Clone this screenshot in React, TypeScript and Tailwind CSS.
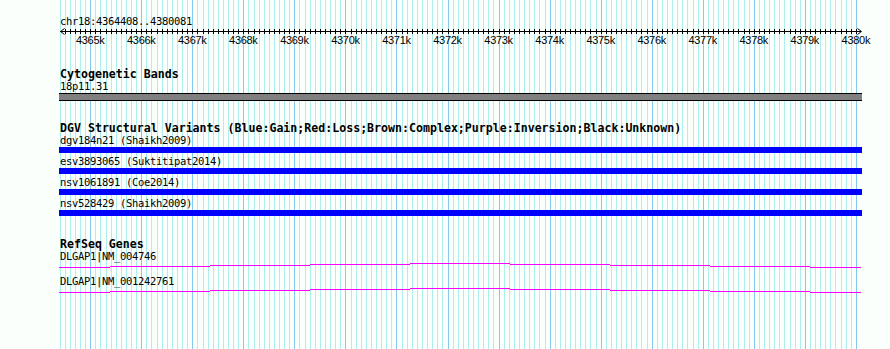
import React from "react";

const START = 4364408;
const END = 4380081;
const px = (bp: number) => 60 + ((bp - START) * 800) / (END - START);

const gridLines: { x: number; major: boolean }[] = [];
for (let bp = 4364400; bp <= 4380000; bp += 100) {
  gridLines.push({ x: Math.round(px(bp)), major: bp % 1000 === 0 });
}

const ticks: number[] = [];
for (let bp = 4364500; bp <= 4380000; bp += 100) ticks.push(Math.round(px(bp)));

const labels: { x: number; t: string }[] = [];
for (let k = 4365; k <= 4380; k++) labels.push({ x: px(k * 1000), t: `${k}k` });

const geneBounds = [59, 110, 210, 310, 410, 510, 610, 710, 810, 861];
const geneRows = [4, 3, 2, 1, 0, 1, 2, 3, 4];

const variants = [
  "dgv184n21 (Shaikh2009)",
  "esv3893065 (Suktitipat2014)",
  "nsv1061891 (Coe2014)",
  "nsv528429 (Shaikh2009)",
];

function Title({ children, className = "" }: { children: React.ReactNode; className?: string }) {
  return (
    <div
      className={`h-[12px] pl-[60px] text-[11.6px] leading-[12px] font-bold whitespace-pre text-black font-['DejaVu_Sans_Mono',monospace] ${className}`}
    >
      {children}
    </div>
  );
}

function Label({ children }: { children: React.ReactNode }) {
  return (
    <div className="h-[13px] pl-[60px] text-[10.5px] leading-[13px] tracking-[-0.32px] whitespace-pre text-black font-['DejaVu_Sans_Mono',monospace]">
      {children}
    </div>
  );
}

function Gene() {
  return (
    <svg className="block" width={890} height={12}>
      {geneRows.map((r, i) => (
        <rect
          key={i}
          x={geneBounds[i]}
          y={r}
          width={geneBounds[i + 1] - geneBounds[i]}
          height={1}
          fill="#ff00ff"
        />
      ))}
    </svg>
  );
}

export default function App() {
  return (
    <div className="relative w-[890px] h-[349px] overflow-hidden bg-[#fbfffb]">
      <svg className="absolute inset-0" width={890} height={349}>
        {gridLines.map((g, i) => (
          <rect
            key={i}
            x={g.x}
            y={0}
            width={1}
            height={349}
            fill={g.major ? "#87c8f0" : "#afeeee"}
          />
        ))}
      </svg>
      <div className="relative flex flex-col pt-[15px]">
        <Label>chr18:4364408..4380081</Label>
        <svg className="block" width={890} height={20}>
          <rect x={60} y={3} width={801} height={1} fill="#000" />
          {ticks.map((x, i) => (
            <rect key={i} x={x} y={1} width={1} height={5} fill="#000" />
          ))}
          <path d="M64.5 0.5 L60.5 3.5 L64.5 6.5" stroke="#000" strokeWidth={1} fill="none" />
          <path d="M857.5 0.5 L861.5 3.5 L857.5 6.5" stroke="#000" strokeWidth={1} fill="none" />
          <g className="font-['Liberation_Sans',Arial,sans-serif]">
            {labels.map((l, i) => (
              <text
                key={i}
                x={l.x}
                y={15.5}
                fontSize={11}
                letterSpacing={-0.3}
                textAnchor="middle"
                fill="#000"
              >
                {l.t}
              </text>
            ))}
          </g>
        </svg>

        <Title className="mt-[20px]">Cytogenetic Bands</Title>
        <Label>18p11.31</Label>
        <div className="ml-[59px] w-[803px] h-[8px] bg-[#808080] border-y border-black" />

        <Title className="mt-[21px]">
          DGV Structural Variants (Blue:Gain;Red:Loss;Brown:Complex;Purple:Inversion;Black:Unknown)
        </Title>
        {variants.map((v) => (
          <div key={v} className="flex flex-col mb-[2px]">
            <Label>{v}</Label>
            <div className="ml-[59px] w-[803px] h-[6px] bg-[#0000ff]" />
          </div>
        ))}

        <Title className="mt-[20px]">RefSeq Genes</Title>
        <Label>DLGAP1|NM_004746</Label>
        <Gene />
        <Label>DLGAP1|NM_001242761</Label>
        <Gene />
      </div>
    </div>
  );
}
